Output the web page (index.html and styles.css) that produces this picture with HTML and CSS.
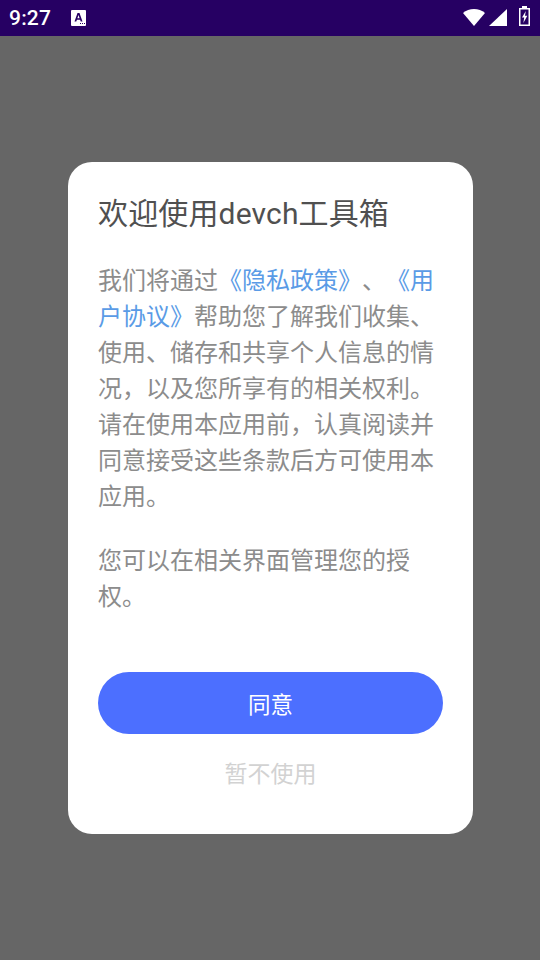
FILE: index.html
```html
<!DOCTYPE html>
<html lang="zh-CN">
<head>
<meta charset="utf-8">
<title>欢迎使用devch工具箱</title>
<link rel="stylesheet" href="styles.css">
</head>
<body>
<div class="screen">
  <header class="status">
    <div class="status-left">
      <span class="time">9:27</span>
      <svg class="a-icon" width="15" height="16" viewBox="0 0 15 16"><path fill="#fff" d="M1 0h13a1 1 0 0 1 1 1v14a1 1 0 0 1-1 1H1a1 1 0 0 1-1-1V1a1 1 0 0 1 1-1z"/><path fill="#260063" d="M6.500 3h2l3 8.500H9.700l-.6-1.800H5.900l-.6 1.800H3.500zm1 1.900L6.400 8.200h2.200z"/><path fill="#260063" d="M9 13h1v1H9zm2 0h1v1h-1zm2 0h1v1h-1z"/></svg>
    </div>
    <div class="status-right">
      <svg class="wifi" width="22" height="17" viewBox="0 0 22 17"><path fill="#fff" d="M0 4C3 1.500 7 0 11 0s8 1.500 11 4L11 17z"/></svg>
      <svg class="signal" width="18" height="17" viewBox="0 0 18 17"><path fill="#fff" d="M18 0v17H0z"/></svg>
      <svg class="battery" width="11" height="20" viewBox="0 0 11 20"><path fill="#fff" fill-rule="evenodd" d="M3 0h5v2h3v18H0V2h3zM1.500 3.500v15h8v-15z"/><path fill="#fff" d="M6.800 5L3 11.500h2.200L4.400 17 8.300 9.800H6z"/></svg>
    </div>
  </header>
  <main class="overlay">
    <section class="dialog">
      <h1 class="title">欢迎使用devch工具箱</h1>
      <p class="text">我们将通过<a class="link">《隐私政策》</a>、<a class="link">《用户协议》</a>帮助您了解我们收集、使用、储存和共享个人信息的情况，以及您所享有的相关权利。请在使用本应用前，认真阅读并同意接受这些条款后方可使用本应用。</p>
      <p class="text second">您可以在相关界面管理您的授权。</p>
      <button class="agree">同意</button>
      <button class="decline">暂不使用</button>
    </section>
  </main>
</div>
</body>
</html>
```
FILE: styles.css
```css
* { box-sizing: border-box; }
html, body { margin: 0; padding: 0; }
body {
  width: 540px;
  height: 960px;
  overflow: hidden;
  font-family: "Noto Sans CJK SC", Roboto, sans-serif;
  text-spacing-trim: space-all;
  font-feature-settings: "chws" 0, "palt" 0;
}
.screen { width: 540px; height: 960px; display: flex; flex-direction: column; background: #666; }
.status {
  height: 36px;
  flex: none;
  background: #260063;
  display: flex;
  justify-content: space-between;
  align-items: center;
  padding: 0 9px;
  color: #fff;
}
.status-left { display: flex; align-items: center; gap: 20px; }
.time { font: 500 21px/36px Roboto, sans-serif; letter-spacing: 0.2px; }
.a-icon { display: block; }
.status-right { display: flex; align-items: flex-end; height: 20px; margin: -4px 1px 0 0; }
.status-right svg { display: block; }
.signal { margin-left: 4px; }
.battery { margin-left: 12px; }
.overlay { flex: 1; padding-top: 126px; padding-left: 68px; }
.dialog {
  width: 405px;
  height: 672px;
  background: #fff;
  border-radius: 24px;
  padding: 31px 30px 0;
  display: flex;
  flex-direction: column;
}
.title {
  margin: 0;
  font-family: Roboto, "Noto Sans CJK SC", sans-serif;
  font-weight: 400;
  font-size: 30px;
  line-height: 42px;
  letter-spacing: 0.15px;
  color: #505050;
}
.text {
  margin: 26px 0 0;
  font-size: 24px;
  line-height: 36px;
  color: #8c8c8c;
}
.text.second { margin-top: 28px; }
.link { color: #5a9be6; }
.agree {
  margin-top: 59px;
  height: 62px;
  flex: none;
  border: 0;
  border-radius: 31px;
  background: #4c6fff;
  color: #fff;
  font: 400 22.500px "Noto Sans CJK SC", sans-serif;
}
.decline {
  margin-top: 18px;
  height: 40px;
  flex: none;
  border: 0;
  background: none;
  color: #d2d2d2;
  font: 400 23px "Noto Sans CJK SC", sans-serif;
}
```
